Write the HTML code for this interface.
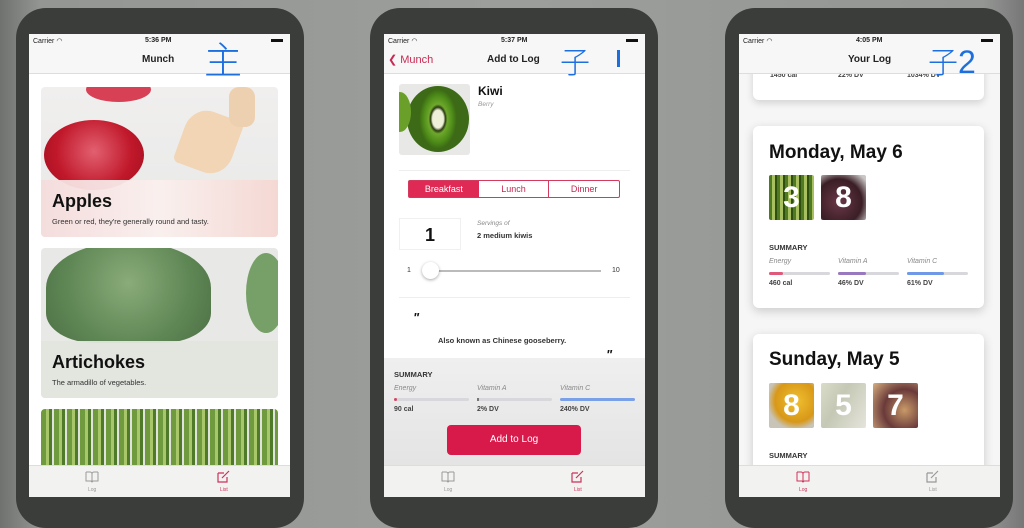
<!DOCTYPE html><html><head><meta charset="utf-8"><style>
*{margin:0;padding:0;box-sizing:border-box}
body{width:1024px;height:503px;overflow:hidden;position:relative;font-family:"Liberation Sans",sans-serif;background:linear-gradient(90deg,#707270 0%,#949694 4%,#9c9e9c 50%,#949694 96%,#777 100%)}
.ph{position:absolute;top:8px;width:288px;height:520px;background:#3b3d3b;border-radius:30px}
.sc{position:absolute;top:34px;width:261px;height:463px;background:#fff;overflow:hidden}
.ab{position:absolute;white-space:nowrap}
.st{font-size:7px;font-weight:bold;color:#222}
.nav{position:absolute;left:0;top:0;width:261px;height:40px;background:#f7f7f7;border-bottom:1px solid #ddd}
.tab{position:absolute;left:0;top:431px;width:261px;height:32px;background:#f2f2f0;border-top:1px solid #ddd}
.tl{font-size:5px;color:#999}
.card{position:absolute;left:12px;width:237px;border-radius:4px;overflow:hidden}
.hw{position:absolute;color:#1d6fe0;font-family:"Noto Sans CJK SC",sans-serif;font-weight:300}
.lbl{font-size:7px;font-style:italic;color:#888}
.val{font-size:7px;font-weight:bold;color:#444}
.bar{height:3px;border-radius:2px;background:#d8d8dc}
</style></head><body>

<!-- phone 1 -->
<div class="ph" style="left:16px"></div>
<div class="sc" style="left:29px">
 <div class="nav"></div>
 <div class="ab st" style="left:4px;top:3px;font-weight:normal">Carrier ︎◠</div>
 <div class="ab st" style="left:116px;top:3px">5:36 PM</div>
 <div class="ab" style="left:242px;top:5px;width:12px;height:3px;background:#111"></div>
 <div class="ab" style="left:113px;top:20px;font-size:10px;font-weight:bold;color:#222">Munch</div>
 <div class="card" style="top:53px;height:150px;background:linear-gradient(#f0efee,#e8e8e8)">
  <div class="ab" style="left:3px;top:33px;width:100px;height:70px;border-radius:50%;background:radial-gradient(circle at 50% 45%,#e26070,#c0182a 60%,#a01020)"></div>
  <div class="ab" style="left:45px;top:-10px;width:65px;height:25px;border-radius:50%;background:#d84055"></div>
  <div class="ab" style="left:140px;top:25px;width:55px;height:60px;border-radius:40% 10% 40% 10%;background:#f2d5b5;transform:rotate(20deg)"></div>
  <div class="ab" style="left:188px;top:0;width:26px;height:40px;border-radius:10px;background:#edd0b0"></div>
  <div class="ab" style="left:0;top:93px;width:237px;height:57px;background:linear-gradient(90deg,rgba(245,220,220,.95),rgba(250,240,238,.95) 50%,rgba(245,215,210,.95))"></div>
  <div class="ab" style="left:11px;top:104px;font-size:18px;font-weight:bold;color:#111">Apples</div>
  <div class="ab" style="left:11px;top:130px;font-size:7.5px;color:#333">Green or red, they're generally round and tasty.</div>
 </div>
 <div class="card" style="top:214px;height:150px;background:#e8e9e6">
  <div class="ab" style="left:5px;top:-5px;width:165px;height:100px;border-radius:45% 45% 30% 30%;background:radial-gradient(circle at 50% 40%,#8aab7a,#5f8755 60%,#4d7045)"></div>
  <div class="ab" style="left:205px;top:5px;width:40px;height:80px;border-radius:50%;background:#77a068"></div>
  <div class="ab" style="left:0;top:93px;width:237px;height:57px;background:rgba(225,230,222,.95)"></div>
  <div class="ab" style="left:11px;top:104px;font-size:18px;font-weight:bold;color:#111">Artichokes</div>
  <div class="ab" style="left:11px;top:130px;font-size:7.5px;color:#333">The armadillo of vegetables.</div>
 </div>
 <div class="card" style="top:375px;height:60px;background:repeating-linear-gradient(90deg,#6f9a3e 0 5px,#a8c66a 5px 8px,#4e7a2a 8px 11px,#e0e2dc 11px 13px)"></div>
 <div class="tab">
  <svg class="ab" style="left:56px;top:5px" width="14" height="12" viewBox="0 0 14 12"><path d="M1 1h4a2 2 0 0 1 2 2v8M13 1H9a2 2 0 0 0-2 2M1 1v9h5l1 1 1-1h5V1" fill="none" stroke="#999" stroke-width="1"/></svg>
  <div class="ab tl" style="left:59px;top:21px">Log</div>
  <svg class="ab" style="left:188px;top:4px" width="14" height="13" viewBox="0 0 14 13"><path d="M1 3h6M1 3v9h9V7M5 8l7-7" fill="none" stroke="#d0315a" stroke-width="1.2"/></svg>
  <div class="ab tl" style="left:191px;top:21px;color:#d0315a">List</div>
 </div>
</div>
<div class="hw" style="left:204px;top:30px;font-size:38px">主</div>

<!-- phone 2 -->
<div class="ph" style="left:370px"></div>
<div class="sc" style="left:384px">
 <div class="nav"></div>
 <div class="ab st" style="left:4px;top:3px;font-weight:normal">Carrier ◠</div>
 <div class="ab st" style="left:117px;top:3px">5:37 PM</div>
 <div class="ab" style="left:242px;top:5px;width:12px;height:3px;background:#111"></div>
 <div class="ab" style="left:4px;top:19px;font-size:11px;color:#c82a52">❮ Munch</div>
 <div class="ab" style="left:103px;top:20px;font-size:10px;font-weight:bold;color:#222">Add to Log</div>
 <div class="ab" style="left:15px;top:50px;width:71px;height:71px;border-radius:3px;background:#e8e8e6;overflow:hidden">
  <div class="ab" style="left:8px;top:2px;width:62px;height:66px;border-radius:50%;background:radial-gradient(ellipse 30% 45%,#eef0d8 30%,#2a3a10 40%,#6ea82c 50%,#4c8a18 80%,#3d6a16)"></div>
  <div class="ab" style="left:-10px;top:8px;width:22px;height:40px;border-radius:50%;background:#6aa02a"></div>
 </div>
 <div class="ab" style="left:94px;top:50px;font-size:12px;font-weight:bold;color:#111">Kiwi</div>
 <div class="ab" style="left:94px;top:67px;font-size:6.5px;font-style:italic;color:#999">Berry</div>
 <div class="ab" style="left:15px;top:136px;width:231px;height:1px;background:#eee"></div>
 <div class="ab" style="left:24px;top:146px;width:212px;height:18px;border:1px solid #d33a5e;border-radius:2px;display:flex;font-size:9px;color:#c8284f">
  <div style="flex:1;background:#df2a55;color:#fff;text-align:center;line-height:16px">Breakfast</div>
  <div style="flex:1;text-align:center;line-height:16px;border-right:1px solid #d33a5e">Lunch</div>
  <div style="flex:1;text-align:center;line-height:16px">Dinner</div>
 </div>
 <div class="ab" style="left:15px;top:184px;width:62px;height:32px;border:1px solid #f0f0f0;font-size:18px;font-weight:bold;text-align:center;line-height:32px;color:#111">1</div>
 <div class="ab" style="left:93px;top:186px;font-size:6.5px;font-style:italic;color:#888">Servings of</div>
 <div class="ab" style="left:93px;top:197px;font-size:7.5px;font-weight:bold;color:#333">2 medium kiwis</div>
 <div class="ab" style="left:23px;top:233px;font-size:7px;color:#333">1</div>
 <div class="ab" style="left:41px;top:236px;width:176px;height:1.5px;background:#bbb"></div>
 <div class="ab" style="left:38px;top:228px;width:17px;height:17px;border-radius:50%;background:#fff;box-shadow:0 1px 3px rgba(0,0,0,.35)"></div>
 <div class="ab" style="left:228px;top:233px;font-size:7px;color:#333">10</div>
 <div class="ab" style="left:15px;top:263px;width:231px;height:1px;background:#eee"></div>
 <div class="ab" style="left:29px;top:276px;font-size:13px;font-weight:bold;font-style:italic;color:#111">"</div>
 <div class="ab" style="left:54px;top:302px;font-size:7.5px;font-weight:bold;color:#333">Also known as Chinese gooseberry.</div>
 <div class="ab" style="left:222px;top:313px;font-size:13px;font-weight:bold;font-style:italic;color:#111">"</div>
 <div class="ab" style="left:0;top:324px;width:261px;height:107px;background:linear-gradient(#efefef,#e4e4e4)"></div>
 <div class="ab" style="left:10px;top:336px;font-size:7.5px;font-weight:bold;color:#333">SUMMARY</div>
 <div class="ab lbl" style="left:10px;top:351px">Energy</div>
 <div class="ab bar" style="left:10px;top:364px;width:75px"><div style="width:3px;height:3px;background:#e0405f;border-radius:2px"></div></div>
 <div class="ab val" style="left:10px;top:372px">90 cal</div>
 <div class="ab lbl" style="left:93px;top:351px">Vitamin A</div>
 <div class="ab bar" style="left:93px;top:364px;width:75px"><div style="width:2px;height:3px;background:#777"></div></div>
 <div class="ab val" style="left:93px;top:372px">2% DV</div>
 <div class="ab lbl" style="left:176px;top:351px">Vitamin C</div>
 <div class="ab bar" style="left:176px;top:364px;width:75px;background:#7aa0e8"></div>
 <div class="ab val" style="left:176px;top:372px">240% DV</div>
 <div class="ab" style="left:63px;top:391px;width:134px;height:30px;border-radius:4px;background:#d81a4b;color:#fff;font-size:10px;text-align:center;line-height:30px">Add to Log</div>
 <div class="tab">
  <svg class="ab" style="left:57px;top:5px" width="14" height="12" viewBox="0 0 14 12"><path d="M1 1h4a2 2 0 0 1 2 2v8M13 1H9a2 2 0 0 0-2 2M1 1v9h5l1 1 1-1h5V1" fill="none" stroke="#999" stroke-width="1"/></svg>
  <div class="ab tl" style="left:60px;top:21px">Log</div>
  <svg class="ab" style="left:187px;top:4px" width="14" height="13" viewBox="0 0 14 13"><path d="M1 3h6M1 3v9h9V7M5 8l7-7" fill="none" stroke="#d0315a" stroke-width="1.2"/></svg>
  <div class="ab tl" style="left:190px;top:21px;color:#d0315a">List</div>
 </div>
</div>
<div class="hw" style="left:560px;top:38px;font-size:30px">子</div>
<div class="ab" style="left:617px;top:50px;width:2.5px;height:17px;background:#1d6fe0"></div>

<!-- phone 3 -->
<div class="ph" style="left:725px"></div>
<div class="sc" style="left:739px;background:#f6f6f6">
 <div class="ab" style="left:14px;top:0;width:231px;height:66px;background:#fff;border-radius:6px;box-shadow:0 3px 8px rgba(0,0,0,.15)"></div>
 <div class="ab val" style="left:31px;top:38px">1450 cal</div>
 <div class="ab val" style="left:99px;top:38px">22% DV</div>
 <div class="ab val" style="left:168px;top:38px">1034% DV</div>
 <div class="nav" style="height:40px;background:rgba(247,247,247,.97)"></div>
 <div class="ab st" style="left:4px;top:3px;font-weight:normal">Carrier ◠</div>
 <div class="ab st" style="left:117px;top:3px">4:05 PM</div>
 <div class="ab" style="left:242px;top:5px;width:12px;height:3px;background:#111"></div>
 <div class="ab" style="left:109px;top:20px;font-size:10px;font-weight:bold;color:#222">Your Log</div>
 <div class="ab" style="left:14px;top:92px;width:231px;height:182px;background:#fff;border-radius:6px;box-shadow:0 3px 10px rgba(0,0,0,.18)"></div>
 <div class="ab" style="left:30px;top:108px;font-size:19px;font-weight:bold;color:#111">Monday, May 6</div>
 <div class="ab" style="left:30px;top:141px;width:45px;height:45px;border-radius:2px;background:repeating-linear-gradient(90deg,#4f7a22 0 3px,#a8c060 3px 6px,#2e4e12 6px 8px);color:#fff;font-size:30px;font-weight:bold;text-align:center;line-height:45px">3</div>
 <div class="ab" style="left:82px;top:141px;width:45px;height:45px;border-radius:2px;background:radial-gradient(circle at 40% 60%,#6a3848,#3a1e26 60%,#c9c6c4 90%);color:#fff;font-size:30px;font-weight:bold;text-align:center;line-height:45px">8</div>
 <div class="ab" style="left:30px;top:209px;font-size:7.5px;font-weight:bold;color:#333">SUMMARY</div>
 <div class="ab lbl" style="left:30px;top:224px">Energy</div>
 <div class="ab bar" style="left:30px;top:238px;width:61px"><div style="width:14px;height:3px;background:#e0587a;border-radius:2px"></div></div>
 <div class="ab val" style="left:30px;top:246px">460 cal</div>
 <div class="ab lbl" style="left:99px;top:224px">Vitamin A</div>
 <div class="ab bar" style="left:99px;top:238px;width:61px"><div style="width:28px;height:3px;background:#9a78c0;border-radius:2px"></div></div>
 <div class="ab val" style="left:99px;top:246px">46% DV</div>
 <div class="ab lbl" style="left:168px;top:224px">Vitamin C</div>
 <div class="ab bar" style="left:168px;top:238px;width:61px"><div style="width:37px;height:3px;background:#6f98e6;border-radius:2px"></div></div>
 <div class="ab val" style="left:168px;top:246px">61% DV</div>
 <div class="ab" style="left:14px;top:300px;width:231px;height:170px;background:#fff;border-radius:6px;box-shadow:0 3px 10px rgba(0,0,0,.18)"></div>
 <div class="ab" style="left:30px;top:315px;font-size:19px;font-weight:bold;color:#111">Sunday, May 5</div>
 <div class="ab" style="left:30px;top:349px;width:45px;height:45px;border-radius:2px;background:radial-gradient(circle at 60% 40%,#f0c030,#d89818 55%,#c8c4b8 75%);color:#fff;font-size:30px;font-weight:bold;text-align:center;line-height:45px">8</div>
 <div class="ab" style="left:82px;top:349px;width:45px;height:45px;border-radius:2px;background:linear-gradient(120deg,#d8dcc8,#c4c8b4 40%,#e6e4dc);color:#fff;font-size:30px;font-weight:bold;text-align:center;line-height:45px">5</div>
 <div class="ab" style="left:134px;top:349px;width:45px;height:45px;border-radius:2px;background:radial-gradient(circle at 70% 60%,#c89a68,#6a3a3a 50%,#d8b080);color:#fff;font-size:30px;font-weight:bold;text-align:center;line-height:45px">7</div>
 <div class="ab" style="left:30px;top:417px;font-size:7.5px;font-weight:bold;color:#333">SUMMARY</div>
 <div class="tab">
  <svg class="ab" style="left:57px;top:5px" width="14" height="12" viewBox="0 0 14 12"><path d="M1 1h4a2 2 0 0 1 2 2v8M13 1H9a2 2 0 0 0-2 2M1 1v9h5l1 1 1-1h5V1" fill="none" stroke="#d0315a" stroke-width="1"/></svg>
  <div class="ab tl" style="left:60px;top:21px;color:#d0315a">Log</div>
  <svg class="ab" style="left:187px;top:4px" width="14" height="13" viewBox="0 0 14 13"><path d="M1 3h6M1 3v9h9V7M5 8l7-7" fill="none" stroke="#999" stroke-width="1.2"/></svg>
  <div class="ab tl" style="left:190px;top:21px">List</div>
 </div>
</div>
<div class="hw" style="left:928px;top:38px;font-size:30px">子<span style="font-family:'Liberation Sans';font-size:32px">2</span></div>
</body></html>
